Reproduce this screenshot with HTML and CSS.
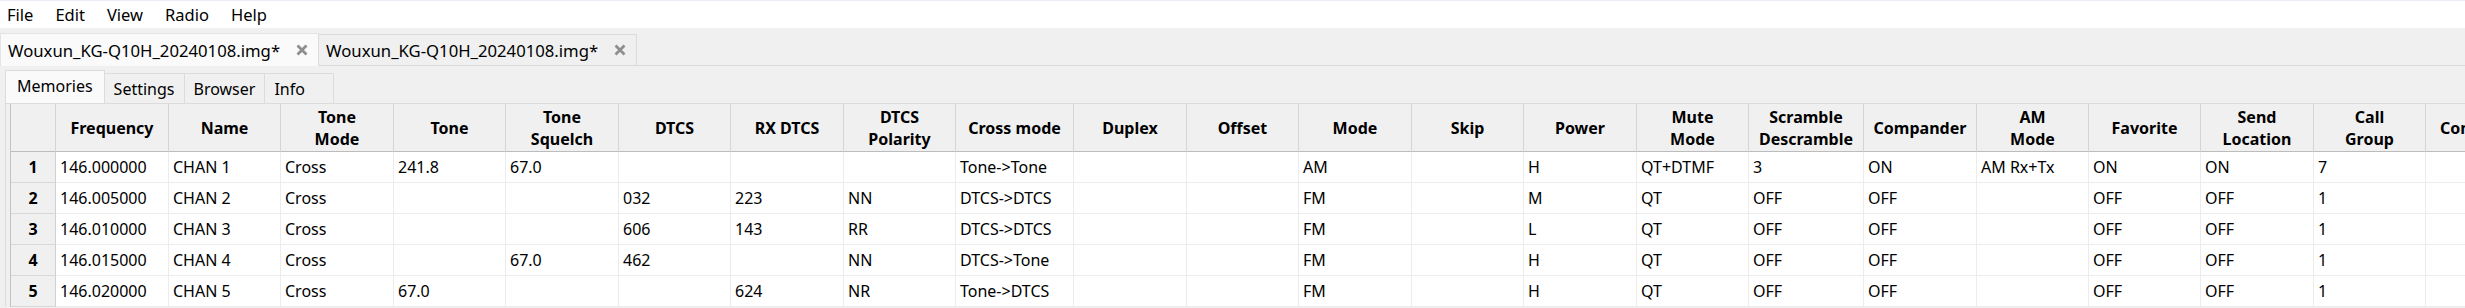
FILE: index.html
```html
<!DOCTYPE html>
<html lang="en">
<head>
  <meta charset="UTF-8" />
  <title>CHIRP</title>
  <link rel="stylesheet" href="styles.css">
</head>
<body>
  <div class="menubar">
    <span>File</span>
    <span>Edit</span>
    <span>View</span>
    <span>Radio</span>
    <span>Help</span>
  </div>

  <div class="doc-tabs">
    <div class="doc-tab active">
      <span>Wouxun_KG-Q10H_20240108.img*</span>
      <svg class="close" width="12" height="12" viewBox="0 0 12 12"><path d="M1.5 1.5L10.5 10.5M10.5 1.5L1.5 10.5" /></svg>
    </div>
    <div class="doc-tab">
      <span>Wouxun_KG-Q10H_20240108.img*</span>
      <svg class="close" width="12" height="12" viewBox="0 0 12 12"><path d="M1.5 1.5L10.5 10.5M10.5 1.5L1.5 10.5" /></svg>
    </div>
  </div>

  <div class="sub-tabs">
    <div class="sub-tab active">Memories</div>
    <div class="sub-tab">Settings</div>
    <div class="sub-tab">Browser</div>
    <div class="sub-tab info">Info</div>
  </div>

  <div class="sub-page">
    <table class="memories">
      <colgroup>
        <col style="width:45px">
        <col style="width:113px"><col style="width:112px"><col style="width:113px"><col style="width:112px">
        <col style="width:113px"><col style="width:112px"><col style="width:113px"><col style="width:112px">
        <col style="width:118px">
        <col style="width:113px"><col style="width:112px"><col style="width:113px"><col style="width:112px">
        <col style="width:113px"><col style="width:112px">
        <col style="width:115px">
        <col style="width:113px"><col style="width:112px"><col style="width:112px"><col style="width:113px"><col style="width:112px">
        <col style="width:150px">
      </colgroup>
      <thead>
        <tr>
          <th></th>
          <th>Frequency</th>
          <th>Name</th>
          <th>Tone<br>Mode</th>
          <th>Tone</th>
          <th>Tone<br>Squelch</th>
          <th>DTCS</th>
          <th>RX DTCS</th>
          <th>DTCS<br>Polarity</th>
          <th>Cross mode</th>
          <th>Duplex</th>
          <th>Offset</th>
          <th>Mode</th>
          <th>Skip</th>
          <th>Power</th>
          <th>Mute<br>Mode</th>
          <th>Scramble<br>Descramble</th>
          <th>Compander</th>
          <th>AM<br>Mode</th>
          <th>Favorite</th>
          <th>Send<br>Location</th>
          <th>Call<br>Group</th>
          <th class="comment">Comment</th>
        </tr>
      </thead>
      <tbody>
        <tr>
          <td class="num">1</td>
          <td>146.000000</td><td>CHAN 1</td><td>Cross</td><td>241.8</td><td>67.0</td>
          <td></td><td></td><td></td><td>Tone-&gt;Tone</td><td></td><td></td>
          <td>AM</td><td></td><td>H</td><td>QT+DTMF</td><td>3</td><td>ON</td>
          <td>AM Rx+Tx</td><td>ON</td><td>ON</td><td>7</td><td></td>
        </tr>
        <tr>
          <td class="num">2</td>
          <td>146.005000</td><td>CHAN 2</td><td>Cross</td><td></td><td></td>
          <td>032</td><td>223</td><td>NN</td><td>DTCS-&gt;DTCS</td><td></td><td></td>
          <td>FM</td><td></td><td>M</td><td>QT</td><td>OFF</td><td>OFF</td>
          <td></td><td>OFF</td><td>OFF</td><td>1</td><td></td>
        </tr>
        <tr>
          <td class="num">3</td>
          <td>146.010000</td><td>CHAN 3</td><td>Cross</td><td></td><td></td>
          <td>606</td><td>143</td><td>RR</td><td>DTCS-&gt;DTCS</td><td></td><td></td>
          <td>FM</td><td></td><td>L</td><td>QT</td><td>OFF</td><td>OFF</td>
          <td></td><td>OFF</td><td>OFF</td><td>1</td><td></td>
        </tr>
        <tr>
          <td class="num">4</td>
          <td>146.015000</td><td>CHAN 4</td><td>Cross</td><td></td><td>67.0</td>
          <td>462</td><td></td><td>NN</td><td>DTCS-&gt;Tone</td><td></td><td></td>
          <td>FM</td><td></td><td>H</td><td>QT</td><td>OFF</td><td>OFF</td>
          <td></td><td>OFF</td><td>OFF</td><td>1</td><td></td>
        </tr>
        <tr>
          <td class="num">5</td>
          <td>146.020000</td><td>CHAN 5</td><td>Cross</td><td>67.0</td><td></td>
          <td></td><td>624</td><td>NR</td><td>Tone-&gt;DTCS</td><td></td><td></td>
          <td>FM</td><td></td><td>H</td><td>QT</td><td>OFF</td><td>OFF</td>
          <td></td><td>OFF</td><td>OFF</td><td>1</td><td></td>
        </tr>
      </tbody>
    </table>
  </div>
</body>
</html>
```

FILE: styles.css
```css
body {
  margin: 0;
  font-family: "Noto Sans", "Liberation Sans", sans-serif;
  font-size: 16px;
  color: #000;
  background-color: #f0f0f0;
  overflow: hidden;
}

/* menu bar */
.menubar {
  display: flex;
  gap: 22px;
  height: 27px;
  padding-left: 7px;
  font-size: 16.5px;
  background: #fff;
  border-top: 1px solid #e9ecf3;
  line-height: 28px;
}

/* document tabs */
.doc-tabs {
  display: flex;
  align-items: flex-end;
  height: 37px;
  border-bottom: 1px solid #dadada;
}

.doc-tab {
  display: flex;
  align-items: center;
  gap: 16px;
  height: 30px;
  padding: 0 10px 0 7px;
  font-size: 16.7px;
  border: 1px solid #dcdcdc;
  border-bottom: none;
  background: #f0f0f0;
}

.doc-tab + .doc-tab {
  margin-left: -1px;
}

.doc-tab.active {
  height: 32px;
  margin-bottom: -1px;
  background: #fafafa;
  border-color: #e4e4e4;
}

.close path {
  stroke: #8e8e8e;
  stroke-width: 2.8;
  fill: none;
}

/* memories / settings tabs */
.sub-tabs {
  display: flex;
  align-items: flex-end;
  height: 37px;
  padding-left: 5px;
}

.sub-tab {
  height: 29px;
  padding: 0 9px;
  line-height: 30px;
  border: 1px solid #dcdcdc;
  border-bottom: none;
}

.sub-tab + .sub-tab {
  margin-left: -1px;
}

.sub-tab.active {
  height: 32px;
  padding: 0 11px;
  line-height: 30px;
  background: #fafafa;
}

.sub-tab.info {
  width: 50px;
}

.sub-page {
  margin-left: 5px;
  padding-left: 4px;
  border-left: 1px solid #dcdcdc;
  border-top: 1px solid #dcdcdc;
  overflow: hidden;
}

/* memory grid */
.memories {
  width: 2565px;
  table-layout: fixed;
  border-collapse: separate;
  border-spacing: 0;
  border-left: 1px solid #c3c3c3;
  background: #fff;
}

.memories th {
  height: 47px;
  padding: 0 2px;
  font-weight: bold;
  line-height: 22px;
  text-align: center;
  background: #f0f0f0;
  border-right: 1px solid #d5d5d5;
  border-bottom: 1px solid #bcbcbc;
  white-space: nowrap;
  overflow: hidden;
}

.memories th.comment {
  padding-left: 14px;
  text-align: left;
}

.memories tbody tr {
  height: 31px;
}

.memories td {
  padding: 0 4px;
  white-space: nowrap;
  overflow: hidden;
  border-right: 1px solid #ececec;
  border-bottom: 1px solid #ececec;
}

.memories td.num {
  padding: 0;
  text-align: center;
  font-weight: bold;
  background: #f0f0f0;
  border-right: 1px solid #d0d0d0;
  border-bottom: 1px solid #d8d8d8;
}
```
